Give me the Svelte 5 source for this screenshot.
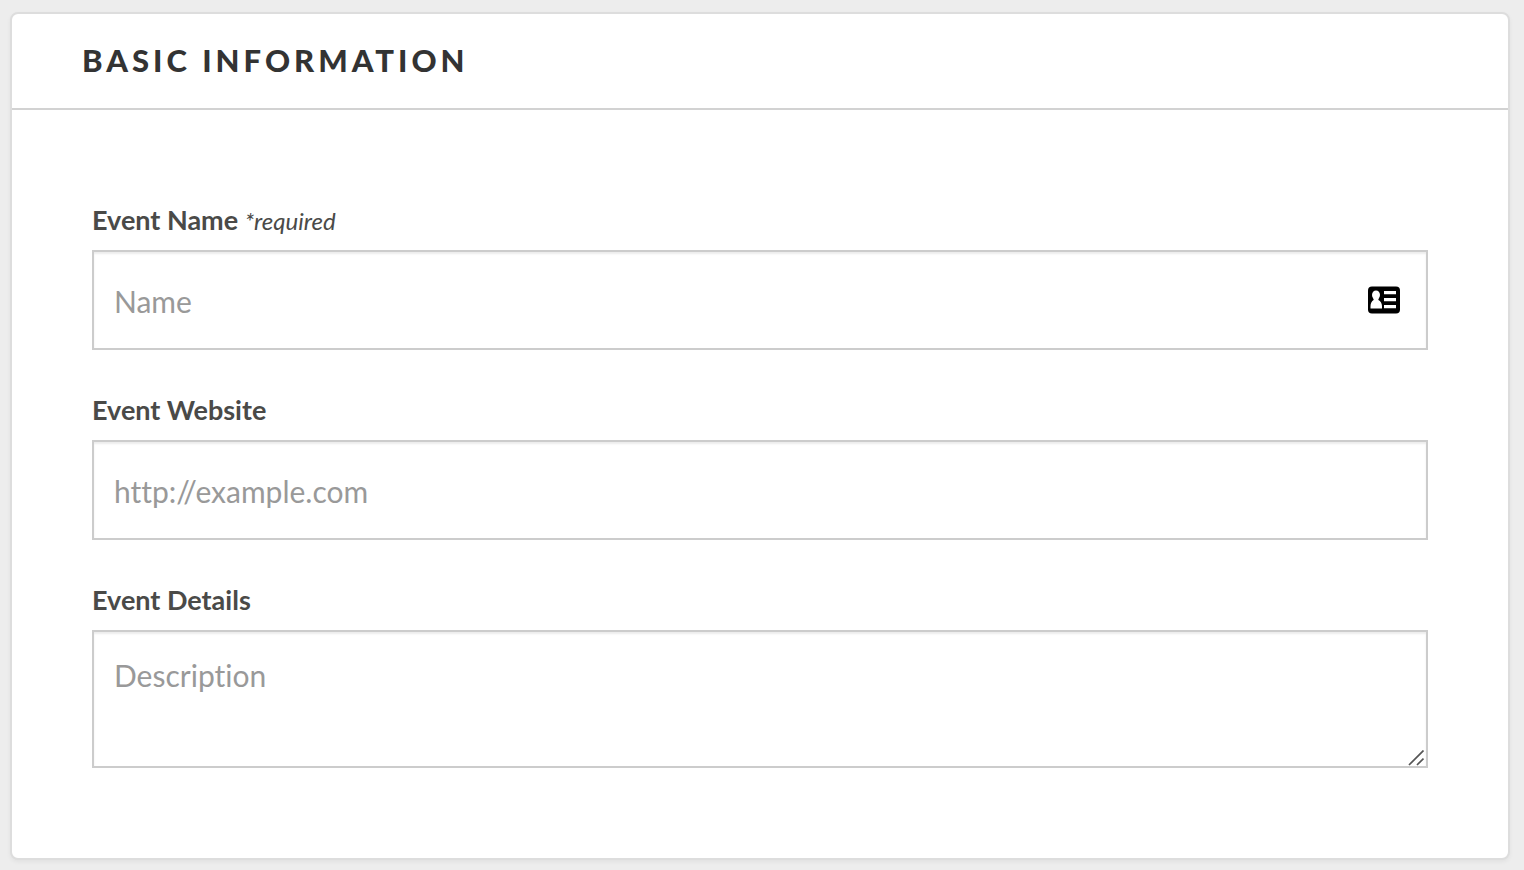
<script>
  let name = $state('');
  let website = $state('');
  let details = $state('');
</script>

<main class="page">
  <section class="card" aria-labelledby="section-title">
    <header class="card-header">
      <h2 id="section-title">Basic Information</h2>
    </header>
    <form class="card-body">
      <div class="field">
        <label for="event-name">Event Name <em>*required</em></label>
        <div class="control">
          <input id="event-name" type="text" placeholder="Name" required bind:value={name} />
          <button class="contact" type="button" aria-label="Fill in from contacts">
            <svg viewBox="0 0 32 28" width="32" height="28" aria-hidden="true">
              <rect y="0.5" width="32" height="27" rx="4" fill="#000" />
              <ellipse cx="8" cy="9" rx="4" ry="4.6" fill="#fff" />
              <path d="M5.6 11h4.8v3c2.2 1.2 3.6 3.4 3.6 6.2V22.500H2.500v-2.300c0-2.800 1.200-5 3.100-6.200z" fill="#fff" />
              <path d="M16 5h12v3.200H16zM16 12h12v3.200H16zM16 19h12v3.200H16z" fill="#fff" />
            </svg>
          </button>
        </div>
      </div>
      <div class="field">
        <label for="event-website">Event Website</label>
        <input id="event-website" type="url" placeholder="http://example.com" bind:value={website} />
      </div>
      <div class="field">
        <label for="event-details">Event Details</label>
        <div class="control">
          <textarea id="event-details" placeholder="Description" bind:value={details}></textarea>
          <svg class="grip" viewBox="0 0 16 16" width="16" height="16" aria-hidden="true">
            <path d="M1 15 15.500 0.500M9 15l6.500-6.500" fill="none" stroke="#555" stroke-width="1.700" />
          </svg>
        </div>
      </div>
    </form>
  </section>
</main>

<style>
  :global(body) {
    margin: 0;
    background: #ededed;
  }

  .page {
    padding: 12px 14px 10px 10px;
    font-family: Lato, 'Open Sans', sans-serif;
    font-variant-ligatures: none;
    color: #4a4a48;
  }

  .card {
    background: #fff;
    border: 2px solid #ddd;
    border-radius: 8px;
    box-shadow: 0 2px 4px rgba(0, 0, 0, 0.05);
  }

  .card-header {
    padding: 22px 70px 24px;
    border-bottom: 2px solid #d2d2d2;
  }

  h2 {
    margin: 0;
    font-size: 31px;
    line-height: 48px;
    font-weight: 900;
    letter-spacing: 4px;
    text-transform: uppercase;
    color: #333;
  }

  .card-body {
    display: flex;
    flex-direction: column;
    gap: 40px;
    padding: 90px 80px;
  }

  .field {
    display: flex;
    flex-direction: column;
    gap: 10px;
  }

  label {
    font-size: 27px;
    line-height: 40px;
    font-weight: 700;
  }

  label em {
    font-size: 24px;
    line-height: 24px;
    font-weight: 400;
  }

  .control {
    position: relative;
    display: flex;
  }

  input,
  textarea {
    box-sizing: border-box;
    width: 100%;
    margin: 0;
    border: 2px solid #ccc;
    border-radius: 0;
    background: #fff;
    box-shadow: inset 0 2px 2px rgba(0, 0, 0, 0.075);
    color: #4a4a48;
    font-family: inherit;
    font-variant-ligatures: inherit;
    font-size: 30px;
    line-height: 40px;
    outline: none;
  }

  input {
    height: 100px;
    padding: 2px 20px 0;
  }

  textarea {
    height: 138px;
    padding: 23px 20px;
    resize: vertical;
  }

  textarea::-webkit-resizer {
    display: none;
  }

  input:focus,
  textarea:focus {
    border-color: #888;
  }

  ::placeholder {
    color: #999;
    opacity: 1;
  }

  .contact {
    position: absolute;
    top: 36px;
    right: 28px;
    padding: 0;
    border: 0;
    background: none;
    cursor: pointer;
  }

  .contact svg {
    display: block;
  }

  .grip {
    position: absolute;
    right: 4px;
    bottom: 2px;
    pointer-events: none;
  }
</style>
